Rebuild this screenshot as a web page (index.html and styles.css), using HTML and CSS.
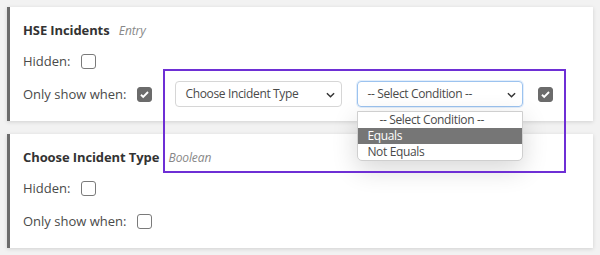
FILE: index.html
```html
<!DOCTYPE html>
<html lang="en">
<head>
    <meta charset="UTF-8">
    <title>Field visibility</title>
    <link rel="stylesheet" href="styles.css">
</head>
<body>

<!-- Trường: HSE Incidents -->
<div class="card">
    <div class="card-title">HSE Incidents <span class="type">Entry</span></div>
    <div class="row">
        <span class="label">Hidden:</span>
        <span class="check"></span>
    </div>
    <div class="row row-tall">
        <span class="label">Only show when:</span>
        <span class="check checked"><svg viewBox="0 0 14 14"><path d="M3.2 7.3l2.4 2.4 5.2-5.4"/></svg></span>
        <div class="select select-field">
            Choose Incident Type
            <svg class="chev" viewBox="0 0 10 6"><path d="M1 1l4 4 4-4"/></svg>
        </div>
        <div class="select select-cond">
            -- Select Condition --
            <svg class="chev" viewBox="0 0 10 6"><path d="M1 1l4 4 4-4"/></svg>
            <ul class="dropdown">
                <li class="opt-head">-- Select Condition --</li>
                <li class="active">Equals</li>
                <li>Not Equals</li>
            </ul>
        </div>
        <span class="check checked"><svg viewBox="0 0 14 14"><path d="M3.2 7.3l2.4 2.4 5.2-5.4"/></svg></span>
    </div>
</div>

<!-- Trường: Choose Incident Type -->
<div class="card">
    <div class="card-title">Choose Incident Type <span class="type">Boolean</span></div>
    <div class="row">
        <span class="label">Hidden:</span>
        <span class="check"></span>
    </div>
    <div class="row row-tall">
        <span class="label">Only show when:</span>
        <span class="check"></span>
    </div>
</div>

<!-- khung đánh dấu -->
<div class="highlight"></div>

</body>
</html>
```

FILE: styles.css
```css
body {
    margin: 0;
    padding: 7px 7px 0 7px;
    background: #f2f2f2;
    font-family: "Open Sans", "Noto Sans", sans-serif;
    color: #4a4a4a;
    width: 586px;
}

.card {
    background: #fff;
    border-left: 3px solid #6b6b6b;
    box-shadow: 0 1px 4px rgba(0, 0, 0, 0.14);
    height: 114px;
    box-sizing: border-box;
    padding: 13px 0 0 13px;
    margin-bottom: 13px;
}

.card-title {
    font-size: 13px;
    font-weight: 700;
    color: #333;
    line-height: 20px;
    height: 20px;
    margin-bottom: 11px;
    letter-spacing: -0.1px;
}

.type {
    font-weight: 400;
    font-style: italic;
    color: #888;
    font-size: 12px;
    margin-left: 6px;
}

.row {
    display: flex;
    align-items: center;
    height: 20px;
    font-size: 13px;
}

.row-tall {
    height: 26px;
    margin-top: 10px;
}

.label {
    margin-right: 11px;
}

.check {
    width: 13px;
    height: 13px;
    border: 1px solid #7a7a7a;
    border-radius: 3px;
    display: inline-block;
    flex: none;
}

.check.checked {
    background: #6b6b6b;
    border-color: #6b6b6b;
}

.check svg {
    width: 13px;
    height: 13px;
    fill: none;
    stroke: #fff;
    stroke-width: 2;
    display: block;
}

.select {
    position: relative;
    height: 26px;
    box-sizing: border-box;
    border: 1px solid #d6d6d6;
    border-radius: 4px;
    padding-left: 9px;
    font-size: 12px;
    letter-spacing: -0.35px;
    line-height: 24px;
    color: #4a4a4a;
    flex: none;
}

.select-field {
    width: 167px;
    margin-left: 23px;
}

.select-cond {
    width: 166px;
    margin-left: 15px;
    margin-right: 15px;
    border-color: #9cc3ef;
    box-shadow: 0 0 0 1px #e3eefb;
}

.chev {
    position: absolute;
    right: 6px;
    top: 10px;
    width: 9px;
    height: 6px;
    fill: none;
    stroke: #333;
    stroke-width: 1.6;
}

.dropdown {
    position: absolute;
    left: -1px;
    top: 29px;
    width: 166px;
    box-sizing: border-box;
    margin: 0;
    padding: 0;
    list-style: none;
    background: #fff;
    border: 1px solid #cfcfcf;
    border-radius: 0 0 5px 5px;
    box-shadow: 0 8px 26px rgba(0, 0, 0, 0.16);
    font-size: 12px;
    line-height: 16px;
    z-index: 2;
}

.dropdown li {
    padding-left: 9px;
    height: 16px;
}

.dropdown .opt-head {
    padding-left: 21px;
}

.dropdown .active {
    background: #767676;
    color: #fff;
}

.highlight {
    position: absolute;
    left: 163px;
    top: 69px;
    width: 399px;
    height: 100px;
    border: 2px solid #6e2fd5;
    z-index: 3;
}
```
